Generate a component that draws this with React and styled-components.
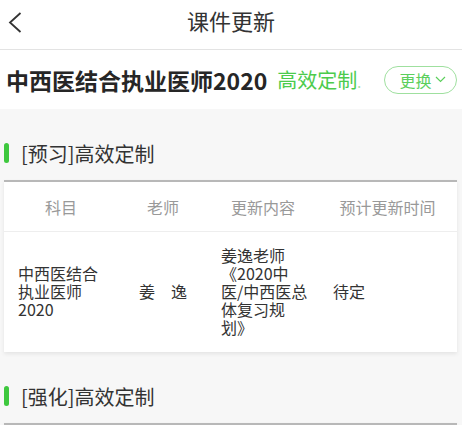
import React from "react";
import styled, { createGlobalStyle } from "styled-components";

const GlobalStyle = createGlobalStyle`
  * { box-sizing: border-box; }
  body {
    margin: 0;
    background: #f7f7f7;
    font-family: "Noto Sans CJK SC", "Noto Sans", sans-serif;
    color: #333;
  }
`;

const rows = [
  {
    subject: "中西医结合执业医师2020",
    teacher: "姜　逸",
    content: "姜逸老师《2020中医/中西医总体复习规划》",
    time: "待定",
  },
];

const sections = ["[预习]高效定制", "[强化]高效定制"];

const App = () => {
  return (
    <>
      <GlobalStyle />
      <Page>
        <NavBar>
          <BackButton>
            <svg width="14" height="22" viewBox="0 0 14 22">
              <polyline points="12.5,1 2,10.5 12.5,20" fill="none" stroke="#333" strokeWidth="1.8" />
            </svg>
          </BackButton>
          <NavTitle>课件更新</NavTitle>
        </NavBar>

        <CourseBar>
          <CourseName>中西医结合执业医师2020</CourseName>
          <CourseTag>
            高效定制<Dot>.</Dot>
          </CourseTag>
          <SwitchButton>
            更换
            <svg width="11" height="7" viewBox="0 0 11 7">
              <polyline points="1,1 5.5,5.5 10,1" fill="none" stroke="#5ccf5c" strokeWidth="1.2" />
            </svg>
          </SwitchButton>
        </CourseBar>

        {sections.map((title, i) => (
          <Section key={title}>
            <SectionTitle>{title}</SectionTitle>
            <Card $empty={i > 0}>
              {i === 0 && (
                <>
                  <HeadRow>
                    <HeadCell>科目</HeadCell>
                    <HeadCell>老师</HeadCell>
                    <HeadCell>更新内容</HeadCell>
                    <HeadCell>预计更新时间</HeadCell>
                  </HeadRow>
                  {rows.map((r, id) => (
                    <DataRow key={id}>
                      <DataCell $pl={14} $pr={14}>{r.subject}</DataCell>
                      <DataCell $center>{r.teacher}</DataCell>
                      <DataCell $pl={13} $pr={8}>{r.content}</DataCell>
                      <DataCell $pl={15}>{r.time}</DataCell>
                    </DataRow>
                  ))}
                </>
              )}
            </Card>
          </Section>
        ))}
      </Page>
    </>
  );
};

export default App;

const Page = styled.div`
  width: 462px;
  min-height: 425px;
  overflow: hidden;
`;

const NavBar = styled.div`
  position: relative;
  height: 50px;
  background: #fff;
  border-bottom: 1px solid #e3e3e3;
  display: flex;
  justify-content: center;
`;

const BackButton = styled.div`
  position: absolute;
  left: 8px;
  top: 12px;
  display: flex;
`;

const NavTitle = styled.div`
  font-size: 22px;
  line-height: 41px;
  color: #333;
`;

const CourseBar = styled.div`
  height: 59px;
  background: #fff;
  display: flex;
  align-items: center;
  padding: 0 5px 0 6px;
`;

const CourseName = styled.div`
  font-size: 23px;
  font-weight: 700;
  color: #262626;
  white-space: nowrap;
`;

const CourseTag = styled.div`
  margin-left: 10px;
  font-size: 20px;
  color: #4ccb4c;
  white-space: nowrap;
  flex: 1;
`;

const Dot = styled.span`
  font-size: 14px;
  color: #a6e3a6;
`;

const SwitchButton = styled.div`
  width: 73px;
  height: 28px;
  border: 1px solid #9fe09f;
  border-radius: 14px;
  display: flex;
  align-items: center;
  justify-content: center;
  gap: 3px;
  font-size: 16px;
  color: #5ccf5c;
  padding-left: 4px;
`;

const Section = styled.div`
  padding-top: 34px;
`;

const SectionTitle = styled.div`
  display: flex;
  align-items: center;
  height: 20px;
  padding-left: 4px;
  font-size: 20px;
  color: #333;
  margin-bottom: 17px;

  &::before {
    content: "";
    width: 5px;
    height: 20px;
    border-radius: 3px;
    background: #3ec83e;
    margin-right: 12px;
  }
`;

const Card = styled.div`
  margin: 0 5px 0 4px;
  background: #fff;
  border-top: 2px solid #b8b8b8;
  box-shadow: 0 2px 4px rgba(0, 0, 0, 0.08);
  min-height: ${(p) => (p.$empty ? "20px" : "0")};
`;

const HeadRow = styled.div`
  display: grid;
  grid-template-columns: 114px 90px 110px 1fr;
  height: 50px;
  align-items: center;
  border-bottom: 1px solid #eee;
`;

const HeadCell = styled.div`
  text-align: center;
  font-size: 16px;
  color: #999;
  white-space: nowrap;
`;

const DataRow = styled.div`
  display: grid;
  grid-template-columns: 114px 90px 110px 1fr;
  align-items: center;
  padding: 14px 0 16px;
  min-height: 120px;
`;

const DataCell = styled.div`
  font-size: 16px;
  line-height: 18px;
  color: #333;
  text-spacing-trim: space-all;
  padding-left: ${(p) => p.$pl || 0}px;
  padding-right: ${(p) => p.$pr || 0}px;
  text-align: ${(p) => (p.$center ? "center" : "left")};
`;
